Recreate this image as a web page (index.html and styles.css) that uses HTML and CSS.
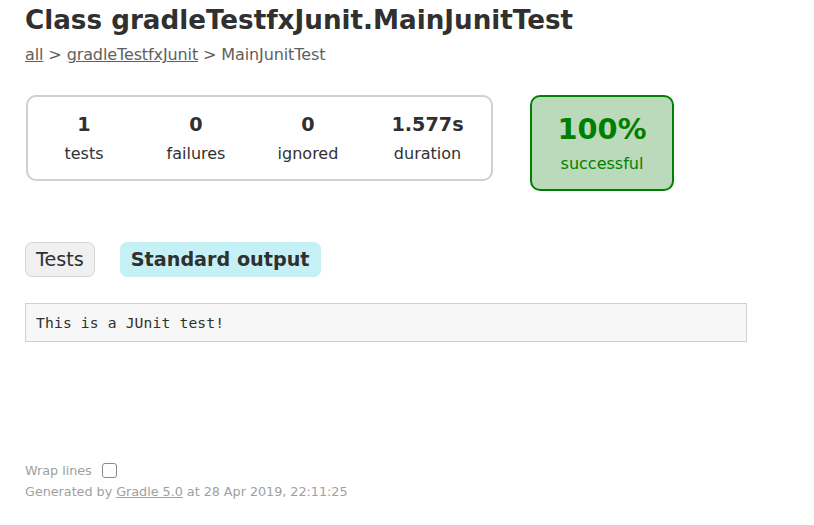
FILE: index.html
```html
<!DOCTYPE html>
<html>
<head>
<meta charset="utf-8">
<title>Test results - Class gradleTestfxJunit.MainJunitTest</title>
<link rel="stylesheet" href="styles.css">
</head>
<body>
<div class="content">
  <h1 class="title">Class gradleTestfxJunit.MainJunitTest</h1>
  <div class="breadcrumbs">
    <a href="#">all</a> &gt; <a href="#">gradleTestfxJunit</a> &gt; MainJunitTest
  </div>
  <div class="summary">
    <div class="summary-group">
      <div class="info-box">
        <div class="counter">1</div>
        <p class="label">tests</p>
      </div>
      <div class="info-box">
        <div class="counter">0</div>
        <p class="label">failures</p>
      </div>
      <div class="info-box">
        <div class="counter">0</div>
        <p class="label">ignored</p>
      </div>
      <div class="info-box duration">
        <div class="counter">1.577s</div>
        <p class="label">duration</p>
      </div>
    </div>
    <div class="info-box success-rate">
      <div class="percent">100%</div>
      <p class="label">successful</p>
    </div>
  </div>
  <ul class="tab-links">
    <li class="tab-link"><a href="#">Tests</a></li>
    <li class="tab-link selected"><a href="#">Standard output</a></li>
  </ul>
  <div class="tab">
    <pre class="code">This is a JUnit test!</pre>
  </div>
  <div class="footer">
    <div class="wrap-row">
      <label class="wrap-label" for="wrap">Wrap lines</label>
      <input class="wrap-toggle" id="wrap" type="checkbox">
    </div>
    <div class="generated">Generated by <a href="#">Gradle 5.0</a> at 28 Apr 2019, 22:11:25</div>
  </div>
</div>
</body>
</html>
```

FILE: styles.css
```css
html, body {
  margin: 0;
  padding: 0;
  background: #ffffff;
}

body {
  font-family: "DejaVu Sans", sans-serif;
  font-size: 16px;
  color: #303030;
}

a {
  color: #303030;
}

.content {
  padding: 5px 25px 20px 25px;
}

.title {
  font-size: 26.2px;
  font-weight: bold;
  margin: 0 0 10px 0;
  line-height: 30px;
  white-space: nowrap;
}

.breadcrumbs,
.breadcrumbs a {
  color: #606060;
}

.breadcrumbs {
  letter-spacing: -0.11px;
}

.summary {
  display: flex;
  align-items: flex-start;
  margin: 31px 0 41px 1px;
}

.summary-group {
  display: flex;
  border: solid 2px #d0d0d0;
  border-radius: 10px;
}

.info-box {
  width: 110px;
  margin: 0 1px;
  padding: 16px 0 16px 0;
  text-align: center;
}

.info-box.duration {
  width: 125px;
}

.label {
  margin: 0;
}

.counter,
.percent {
  font-size: 19.2px;
  font-weight: bold;
  margin-bottom: 8px;
}

.success-rate {
  width: 140px;
  margin: 0 0 0 37px;
  padding: 15px 0 16px 0;
  border: solid 2px #008000;
  border-radius: 10px;
  background-color: #bbd9bb;
  color: #008000;
}

.success-rate .percent {
  font-size: 28.8px;
}

.tab-links {
  display: flex;
  gap: 25px;
  list-style: none;
  margin: 0;
  padding: 10px 0;
}

.tab-link {
  padding: 5px 10px;
  border: solid 1px #d4d4d4;
  border-radius: 7px;
  background-color: #f0f0f0;
}

.tab-link a {
  font-size: 19.2px;
  text-decoration: none;
  display: block;
}

.tab-link.selected {
  background-color: #c5f0f5;
  border-color: #c5f0f5;
}

.tab-link.selected a {
  font-weight: bold;
}

.tab {
  padding-top: 16px;
}

.code {
  font-family: "DejaVu Sans Mono", monospace;
  font-size: 14.67px;
  letter-spacing: 0.14px;
  width: 700px;
  margin: 0;
  padding: 10px;
  background-color: #f7f7f7;
  border: solid 1px #d0d0d0;
}

.footer {
  margin-top: 118px;
  font-size: 12.8px;
  letter-spacing: -0.04px;
  color: #a0a0a0;
  white-space: nowrap;
}

.footer a {
  color: #a0a0a0;
}

.wrap-row {
  display: flex;
  align-items: center;
}

.wrap-label {
  margin-right: 7px;
}

.wrap-toggle {
  appearance: none;
  -webkit-appearance: none;
  width: 15px;
  height: 15px;
  margin: 3px;
  border: solid 1px #8a8a8a;
  border-radius: 3px;
  background: #ffffff;
}

.generated {
  margin-top: 3px;
}
```
